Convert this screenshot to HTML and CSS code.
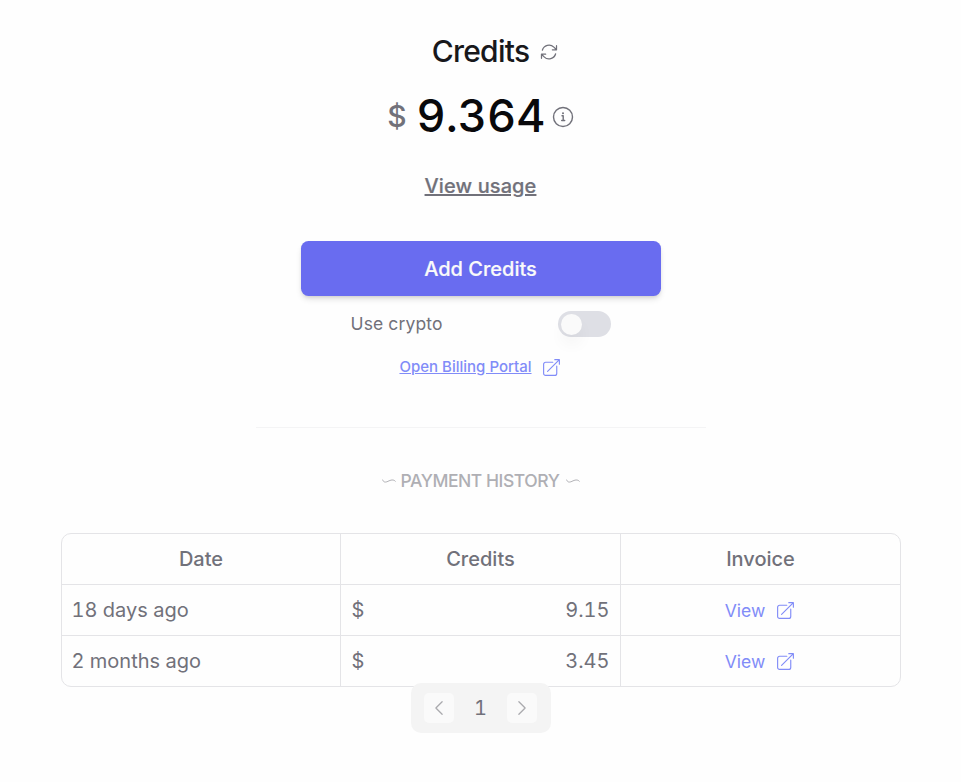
FILE: index.html
```html
<!DOCTYPE html>
<html lang="en">
<head>
<meta charset="utf-8">
<title>Credits</title>
<link rel="stylesheet" href="styles.css">
</head>
<body>
<svg class="defs" width="0" height="0" aria-hidden="true">
  <symbol id="external" viewBox="0 0 24 24"><path d="M13.5 6H5.25A2.25 2.25 0 0 0 3 8.25v10.5A2.25 2.25 0 0 0 5.25 21h10.5A2.25 2.25 0 0 0 18 18.75V10.5m-10.5 6L21 3m0 0h-5.25M21 3v5.25"/></symbol>
  <symbol id="wave" viewBox="0 0 14 6"><path d="M.7 2C1.500 4.500 3.500 4.500 6 3.300S11.500 1 13.300 3.200"/></symbol>
</svg>
<main class="page">
  <h1 class="title"><span>Credits</span>
    <svg class="icon refresh" viewBox="0 0 24 24"><path d="M16.023 9.348h4.992v-.001M2.985 19.644v-4.992m0 0h4.992m-4.993 0 3.181 3.183a8.25 8.25 0 0 0 13.803-3.7M4.031 9.865a8.25 8.25 0 0 1 13.803-3.7l3.181 3.182m0-4.991v4.99"/></svg>
  </h1>
  <div class="balance">
    <span class="currency">$</span><span class="amount">9.364</span>
    <svg class="icon info" viewBox="0 0 22 22"><circle cx="11" cy="11" r="9.500"/><path d="M10 9.700h1.200v4.800M9.700 14.500h3"/><circle class="dot" cx="11" cy="7.300" r="1"/></svg>
  </div>
  <a class="usage">View usage</a>
  <button class="add">Add Credits</button>
  <label class="crypto"><span>Use crypto</span><span class="switch"><span class="thumb"></span></span></label>
  <a class="portal"><span>Open Billing Portal</span><svg class="icon ext"><use href="#external"/></svg></a>
  <hr class="divider">
  <h2 class="history"><svg class="icon wave"><use href="#wave"/></svg><span>PAYMENT HISTORY</span><svg class="icon wave"><use href="#wave"/></svg></h2>
  <div class="table">
    <div class="row head"><div>Date</div><div>Credits</div><div>Invoice</div></div>
    <div class="row"><div>18 days ago</div><div class="money"><span>$</span><span>9.15</span></div><div class="invoice"><a>View</a><svg class="icon ext"><use href="#external"/></svg></div></div>
    <div class="row"><div>2 months ago</div><div class="money"><span>$</span><span>3.45</span></div><div class="invoice"><a>View</a><svg class="icon ext"><use href="#external"/></svg></div></div>
  </div>
  <nav class="pager">
    <span class="step"><svg class="icon" viewBox="0 0 24 24"><path d="M15.750 19.500 8.250 12l7.500-7.500"/></svg></span>
    <span class="current">1</span>
    <span class="step"><svg class="icon" viewBox="0 0 24 24"><path d="m8.250 4.500 7.500 7.500-7.500 7.500"/></svg></span>
  </nav>
</main>
</body>
</html>
```
FILE: styles.css
```css
* { box-sizing: border-box; }
body { margin: 0; background: #fefefe; color: #71717a; font: 400 20px/30px Inter, sans-serif; font-variant-numeric: tabular-nums; }
.defs { display: block; height: 0; }
.icon { fill: none; stroke: currentColor; stroke-width: 1.5; stroke-linecap: round; stroke-linejoin: round; flex: none; }
.page { display: flex; flex-direction: column; align-items: center; padding-top: 31px; }
.title { display: flex; align-items: center; gap: 10px; height: 40px; margin: 0 0 0 30px; color: #18181b; font-size: 30px; font-weight: 500; letter-spacing: -.75px; }
.refresh { width: 20px; height: 20px; margin-top: 1px; color: #71717a; }
.balance { display: flex; align-items: center; height: 50px; margin-top: 20px; }
.currency { font-size: 30px; font-weight: 500; margin-right: 10px; }
.amount { color: #09090b; font-size: 45px; font-weight: 500; }
.info { width: 22px; height: 22px; margin: 1px 0 0 6.500px; stroke-width: 1.4; }
.info .dot { fill: currentColor; stroke: none; }
.usage { margin-top: 30px; font-weight: 500; letter-spacing: .1px; text-decoration: underline; -webkit-text-stroke: .2px currentColor; }
.add { width: 360px; height: 55px; margin-top: 40px; border: 0; border-radius: 7.500px; background: #696cf0; color: #fafafa; font: 500 20px/30px Inter, sans-serif; -webkit-text-stroke: .2px currentColor; box-shadow: 0 4px 6px -1px rgb(0 0 0 / 12%), 0 2px 4px -2px rgb(0 0 0 / 15%); }
.crypto { display: flex; align-items: center; justify-content: space-between; width: 261px; height: 26px; margin-top: 15px; font-size: 17.500px; letter-spacing: .15px; }
.crypto > :first-child { padding-left: .5px; }
.switch { width: 53px; height: 26px; padding: 3px; border-radius: 13px; background: #dedfe5; }
.thumb { display: block; width: 21px; height: 21px; border-radius: 50%; background: #fafafa; box-shadow: 0 10px 15px rgb(0 0 0 / 4%); }
.portal { display: flex; align-items: center; gap: 9.500px; height: 26px; margin: 17px 0 0 .5px; color: #818cf8; font-size: 15px; font-weight: 500; }
.portal span { text-decoration: underline; }
.ext { width: 21px; height: 21px; stroke-width: 1.3; }
.divider { width: 450px; height: 1px; margin: 47px 0 0; border: 0; background: #f4f4f5; }
.history { display: flex; align-items: center; gap: 5px; height: 30px; margin: 38px 0 0 1px; color: #afafb4; font-size: 17.500px; font-weight: 500; letter-spacing: -.45px; }
.history .wave:last-child { margin-left: 2px; }
.wave { width: 14px; height: 6px; stroke-width: 1; }
.table { width: 840px; margin-top: 37px; border: 1px solid #e4e4e7; border-radius: 10px; }
.row { display: grid; grid-template-columns: 278px 280px 280px; height: 51px; border-top: 1px solid #e4e4e7; }
.row > div { display: flex; align-items: center; padding: 0 10px; border-left: 1px solid #e4e4e7; }
.row > div:first-child { border-left: 0; }
.head { height: 50px; border-top: 0; font-weight: 500; }
.row.head > div { justify-content: center; padding: 0 10px 0 11px; }
.row > .money { justify-content: space-between; padding: 0 10px 0 11px; }
.row > .invoice { justify-content: center; gap: 10px; padding-top: 1px; padding-left: 11px; color: #818cf8; font-size: 17.500px; }
.invoice .ext { margin-top: -1px; }
.pager { position: relative; display: flex; align-items: center; justify-content: space-between; width: 140px; height: 50px; margin-top: -4px; padding: 0 14px 0 13px; border-radius: 10px; background: #f4f4f4; }
.current { padding-left: 1px; }
.step { display: flex; align-items: center; justify-content: center; width: 30px; height: 30px; border-radius: 5px; background: #fafafa; color: #aaaaae; }
.step .icon { width: 20px; height: 20px; }
```
